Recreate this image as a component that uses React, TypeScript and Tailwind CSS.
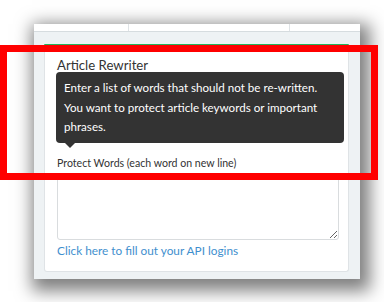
import React from "react";

export default function App() {
  return (
    <div className="relative h-[302px] w-[384px] overflow-hidden bg-white pl-[34px] pt-[24px] font-['Lato',sans-serif]">
      {/* Outer panel */}
      <div className="h-[255px] w-[326px] bg-[#eef2f4] shadow-[4px_6px_16px_6px_rgba(0,0,0,0.5)]">
        {/* Table strip */}
        <div className="flex h-[8px] border-b border-[#d6dcdf] bg-white">
          <div className="w-[95px] border-r border-[#dfe3e6]" />
          <div className="w-[161px] border-r border-[#dfe3e6]" />
          <div className="flex-1" />
        </div>

        <div className="pl-[10px] pr-[11px] pt-[12px]">
          {/* Card */}
          <div className="relative h-[228px] rounded-b-[3px] border border-t-2 border-[#dfe3e6] border-t-[#22b35c] bg-white px-[12px] pt-[9px]">
            <h3 className="text-[13.2px] leading-[20px] text-[#333]">Article Rewriter</h3>

            <label className="mt-[80px] block text-[10.6px] leading-[17px] text-[#333]">
              Protect Words (each word on new line)
            </label>
            <textarea className="mt-[4px] block h-[64px] w-[282px] rounded-[3px] border border-[#d9dcde] bg-white outline-none" />
            <a className="mt-[2px] block text-[11.8px] leading-[18px] text-[#3f8fce]">
              Click here to fill out your API logins
            </a>

            {/* Tooltip */}
            <div className="absolute left-[11px] top-[26px] w-[288px] rounded-[4px] bg-[#333333] px-[8px] py-[6px] text-[11.6px] leading-[19.5px] text-white">
              Enter a list of words that should not be re-written.
              <br />
              You want to protect article keywords or important
              <br />
              phrases.
              <span className="absolute bottom-[-5px] left-[9px] h-0 w-0 border-x-[5px] border-t-[5px] border-x-transparent border-t-[#333333]" />
            </div>
          </div>
        </div>
      </div>

      {/* Red annotation box */}
      <div className="absolute left-0 top-[45px] h-[135px] w-[378px] border-[7px] border-[#ff0000]" />
    </div>
  );
}
